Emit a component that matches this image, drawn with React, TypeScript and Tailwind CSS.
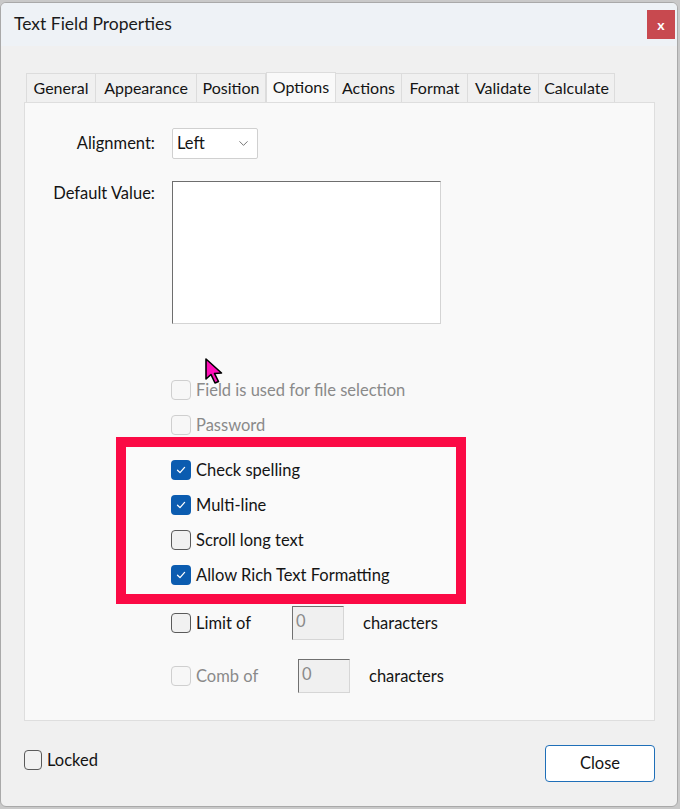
import { ChevronDown } from 'lucide-react';

const tabs = [
  { name: 'General', w: 'w-[70px]' },
  { name: 'Appearance', w: 'w-[101px]' },
  { name: 'Position', w: 'w-[69px]' },
  { name: 'Options', w: 'w-[70px]', active: true },
  { name: 'Actions', w: 'w-[66px]' },
  { name: 'Format', w: 'w-[66px]' },
  { name: 'Validate', w: 'w-[71px]' },
  { name: 'Calculate', w: 'w-[76px]' },
];

const Box = ({ checked, disabled }: { checked?: boolean; disabled?: boolean }) => {
  if (checked) {
    return (
      <span className="flex h-[20px] w-[20px] items-center justify-center rounded-[4px] bg-[#0b5cb0]">
        <svg width="12" height="12" viewBox="0 0 12 12" fill="none">
          <path d="M2.5 6.2 L5 8.6 L9.6 3.4" stroke="white" strokeWidth="1.3" strokeLinecap="round" strokeLinejoin="round" />
        </svg>
      </span>
    );
  }
  return (
    <span
      className={
        disabled
          ? 'block h-[20px] w-[20px] rounded-[4px] border border-[#cfcfcf] bg-[#f7f7f7]'
          : 'block h-[20px] w-[20px] rounded-[4px] border border-[#5a5a5a] bg-[#f1f1f1]'
      }
    />
  );
};

const CheckRow = ({
  label,
  checked,
  disabled,
}: {
  label: string;
  checked?: boolean;
  disabled?: boolean;
}) => (
  <div className="flex h-[24px] items-center gap-[5px]">
    <Box checked={checked} disabled={disabled} />
    <span className={disabled ? 'text-[#8a8a8a]' : 'text-[#141414]'}>{label}</span>
  </div>
);

const App = () => {
  return (
    <div className="h-[809px] w-[680px] bg-[#c9c9c9] pt-[2px] font-['Lato',sans-serif] text-[16.5px] text-[#141414]">
      <div className="flex h-[805px] w-[678px] flex-col overflow-hidden rounded-[6px] border border-[#a9a9a9] bg-[#f0f0f0]">
        {/* title bar */}
        <div className="flex h-[43px] shrink-0 items-center justify-between bg-[#eef2f6] pl-[13px] pr-[2px]">
          <span className="text-[17.5px] text-[#1b1b1b]">Text Field Properties</span>
          <button className="flex h-[29px] w-[28px] items-center justify-center bg-[#c8494f] text-[14px] font-bold leading-none text-white">
            x
          </button>
        </div>

        <div className="flex flex-1 flex-col pl-[23px] pr-[23px] pt-[26px]">
          {/* tabs */}
          <div className="ml-[2px] flex h-[30px] items-end text-[16px]">
            {tabs.map((t) =>
              t.active ? (
                <div
                  key={t.name}
                  className={`${t.w} relative -mb-px flex h-[31px] items-start justify-center border border-b-0 border-[#dcdcdc] bg-[#f9f9f9] pt-[2px] text-[#141414]`}
                >
                  {t.name}
                </div>
              ) : (
                <div
                  key={t.name}
                  className={`${t.w} flex h-[29px] items-center justify-center border border-l-0 border-b-0 border-[#dcdcdc] bg-[#f0f0f0] text-[#141414] first:border-l`}
                >
                  {t.name}
                </div>
              ),
            )}
          </div>

          {/* panel */}
          <div className="relative flex h-[619px] w-[631px] flex-col border border-[#dedede] bg-[#f9f9f9] pt-[25px]">
            <div className="flex items-center">
              <span className="w-[130px] text-right">Alignment:</span>
              <div className="ml-[17px] flex h-[31px] w-[86px] items-center justify-between rounded-[2px] border border-[#d0d0d0] bg-white pl-[4px] pr-[6px]">
                <span>Left</span>
                <ChevronDown size={15} strokeWidth={1.3} className="text-[#555]" />
              </div>
            </div>

            <div className="mt-[22px] flex items-start">
              <span className="w-[130px] text-right">Default Value:</span>
              <div className="ml-[17px] h-[143px] w-[269px] border border-[#d4d4d4] border-l-[#6e6e6e] border-t-[#6e6e6e] bg-white" />
            </div>

            <div className="ml-[146px] mt-[54px] flex flex-col gap-[11px]">
              <CheckRow label="Field is used for file selection" disabled />
              <CheckRow label="Password" disabled />
            </div>

            <div className="ml-[91px] w-[350px] border-[10px] border-[#fb0a45] bg-[#fafafa] pb-[7px] pl-[45px] pt-[11px]">
              <div className="flex flex-col gap-[11px]">
                <CheckRow label="Check spelling" checked />
                <CheckRow label="Multi-line" checked />
                <CheckRow label="Scroll long text" />
                <CheckRow label="Allow Rich Text Formatting" checked />
              </div>
            </div>

            <div className="ml-[146px] mt-[2px] flex h-[34px] items-center">
              <Box />
              <span className="ml-[5px] w-[96px]">Limit of</span>
              <div className="h-[34px] w-[52px] border border-[#d6d6d6] border-l-[#707070] border-t-[#707070] bg-[#f0f0f0] pl-[3px] pt-[2px] text-[#8a8a8a]">
                0
              </div>
              <span className="ml-[19px]">characters</span>
            </div>

            <div className="ml-[146px] mt-[19px] flex h-[34px] items-center">
              <Box disabled />
              <span className="ml-[5px] w-[102px] text-[#8a8a8a]">Comb of</span>
              <div className="h-[34px] w-[52px] border border-[#d6d6d6] border-l-[#707070] border-t-[#707070] bg-[#f0f0f0] pl-[3px] pt-[2px] text-[#8a8a8a]">
                0
              </div>
              <span className="ml-[19px]">characters</span>
            </div>

            {/* mouse pointer */}
            <svg
              className="absolute left-[179px] top-[254px]"
              width="22"
              height="30"
              viewBox="0 0 22 30"
            >
              <path
                d="M2 2 L2 22 L7 17.5 L11 26 L14.5 24.5 L10.5 16.5 L17.5 16 Z"
                fill="#ff0fb8"
                stroke="black"
                strokeWidth="1.6"
                strokeLinejoin="round"
              />
            </svg>
          </div>

          {/* footer */}
          <div className="mt-[24px] flex items-start justify-between">
            <div className="mt-[3px] flex items-center gap-[5px]">
              <span className="block h-[20px] w-[18px] rounded-[4px] border border-[#5a5a5a] bg-[#f1f1f1]" />
              <span>Locked</span>
            </div>
            <button className="mr-[-1px] flex h-[37px] w-[110px] items-center justify-center rounded-[4px] border border-[#1f6fb8] bg-white text-[16.5px] text-[#141414]">
              Close
            </button>
          </div>
        </div>
      </div>
    </div>
  );
};

export default App;
